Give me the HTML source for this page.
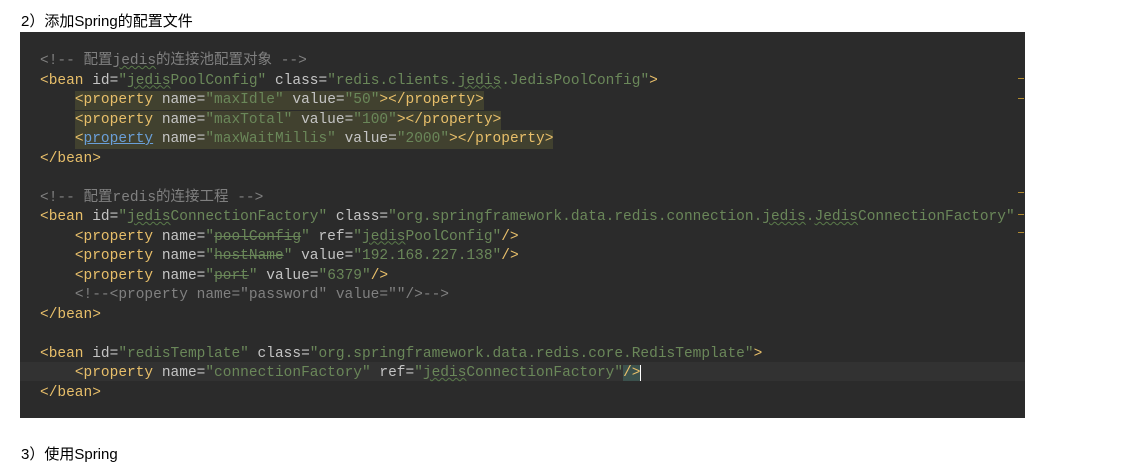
<!DOCTYPE html>
<html><head><meta charset="utf-8"><style>
body{margin:0;background:#fff;width:1129px;height:453px;overflow:hidden;position:relative;font-family:"Liberation Sans","Noto Sans CJK SC",sans-serif}
.h{position:absolute;left:21px;top:10px;font-size:15px;color:#000}
.h2{position:absolute;left:21px;top:443px;font-size:15px;color:#000}
.p{position:absolute;left:20px;top:32px;width:1005px;height:386px;background:#2b2b2b;overflow:hidden}
.code{position:absolute;left:20px;top:20px;font-family:"Liberation Mono","Noto Sans CJK SC",monospace;font-size:14.5px;line-height:19.5px;white-space:pre;color:#c4c4c4}
.t{color:#e8bf6a}.v{color:#6a8759}.c{color:#808080}
.hl{background:#41412f;padding:1px 0 2px}
.cur{position:absolute;left:0;top:330px;width:1005px;height:19px;background:#323232}
.s{text-decoration:line-through}
.u{text-decoration:underline wavy #5a7a4a;text-decoration-thickness:1px}
.m{position:absolute;left:998px;width:6px;height:1px;background:#b08a30}
</style></head><body>
<div class="h">2）添加Spring的配置文件</div>
<div class="p">
<div class="cur"></div>
<div class="m" style="top:46px"></div><div class="m" style="top:66px"></div><div class="m" style="top:160px"></div><div class="m" style="top:182px"></div><div class="m" style="top:200px"></div>
<div class="code"><span class="c">&lt;!-- 配置<span class="u">jedis</span>的连接池配置对象 --&gt;</span>
<span class="t">&lt;bean</span> id=<span class="v">"<span class="u">jedis</span>PoolConfig"</span> class=<span class="v">"redis.clients.<span class="u">jedis</span>.JedisPoolConfig"</span><span class="t">&gt;</span>
    <span class="hl"><span class="t">&lt;property</span> name=<span class="v">"maxIdle"</span> value=<span class="v">"50"</span><span class="t">&gt;&lt;/property&gt;</span></span>
    <span class="hl"><span class="t">&lt;property</span> name=<span class="v">"maxTotal"</span> value=<span class="v">"100"</span><span class="t">&gt;&lt;/property&gt;</span></span>
    <span class="hl"><span class="t">&lt;</span><span style="color:#6a9fd8;text-decoration:underline">property</span> name=<span class="v">"maxWaitMillis"</span> value=<span class="v">"2000"</span><span class="t">&gt;&lt;/property&gt;</span></span>
<span class="t">&lt;/bean&gt;</span>

<span class="c">&lt;!-- 配置redis的连接工程 --&gt;</span>
<span class="t">&lt;bean</span> id=<span class="v">"<span class="u">jedis</span>ConnectionFactory"</span> class=<span class="v">"org.springframework.data.redis.connection.<span class="u">jedis</span>.<span class="u">Jedis</span>ConnectionFactory"</span>
    <span class="t">&lt;property</span> name=<span class="v">"<span class="s">poolConfig</span>"</span> ref=<span class="v">"<span class="u">jedis</span>PoolConfig"</span><span class="t">/&gt;</span>
    <span class="t">&lt;property</span> name=<span class="v">"<span class="s">hostName</span>"</span> value=<span class="v">"192.168.227.138"</span><span class="t">/&gt;</span>
    <span class="t">&lt;property</span> name=<span class="v">"<span class="s">port</span>"</span> value=<span class="v">"6379"</span><span class="t">/&gt;</span>
    <span class="c">&lt;!--&lt;property name="password" value=""/&gt;--&gt;</span>
<span class="t">&lt;/bean&gt;</span>

<span class="t">&lt;bean</span> id=<span class="v">"redisTemplate"</span> class=<span class="v">"org.springframework.data.redis.core.RedisTemplate"</span><span class="t">&gt;</span>
    <span class="t">&lt;property</span> name=<span class="v">"connectionFactory"</span> ref=<span class="v">"<span class="u">jedis</span>ConnectionFactory"</span><span class="t" style="background:#3b514d">/&gt;</span><span style="border-left:1px solid #fff"></span>
<span class="t">&lt;/bean&gt;</span></div>
</div>
<div class="h2">3）使用Spring</div>
</body></html>
